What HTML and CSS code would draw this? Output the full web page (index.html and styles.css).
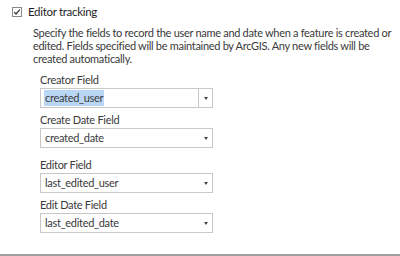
FILE: index.html
```html
<!DOCTYPE html>
<html>
<head>
<meta charset="utf-8">
<link rel="stylesheet" href="styles.css">
</head>
<body>
<div class="panel">
  <div class="header">
    <span class="checkbox">
      <svg width="8" height="8" viewBox="0 0 8 8"><path d="M1.2 4.2 L3 6 L6.8 1.6" fill="none" stroke="#333" stroke-width="1.2"/></svg>
    </span>
    <span class="title">Editor tracking</span>
  </div>
  <p class="desc">Specify the fields to record the user name and date when a feature is created or edited. Fields specified will be maintained by ArcGIS. Any new fields will be created automatically.</p>
  <div class="fields">
    <div class="group">
      <div class="label">Creator Field</div>
      <div class="select focused"><span class="value selected">created_user</span><span class="btn"><span class="arrow"></span></span></div>
      <div class="label">Create Date Field</div>
      <div class="select"><span class="value">created_date</span><span class="btn"><span class="arrow"></span></span></div>
    </div>
    <div class="group">
      <div class="label">Editor Field</div>
      <div class="select"><span class="value">last_edited_user</span><span class="btn"><span class="arrow"></span></span></div>
      <div class="label">Edit Date Field</div>
      <div class="select"><span class="value">last_edited_date</span><span class="btn"><span class="arrow"></span></span></div>
    </div>
  </div>
  <div class="rule"></div>
</div>
</body>
</html>
```

FILE: styles.css
```css
html, body {
  margin: 0;
  padding: 0;
  background: #fff;
}
body {
  font-family: "Lato", "Noto Sans", sans-serif;
  font-size: 11px;
  letter-spacing: -0.3px;
  color: #3a3a3a;
  width: 400px;
  height: 256px;
  overflow: hidden;
}
.panel {
  display: flex;
  flex-direction: column;
  height: 256px;
}
.header {
  display: flex;
  align-items: center;
  gap: 6px;
  padding: 4px 0 0 12px;
  height: 16px;
}
.checkbox {
  width: 8px;
  height: 8px;
  border: 1px solid #8a8a8a;
  background: #fff;
  display: flex;
  align-items: center;
  justify-content: center;
}
.checkbox svg { display: block; }
.title {
  font-size: 11.5px;
  color: #1e1e1e;
  line-height: 16px;
}
.desc {
  margin: 6px 0 0 33px;
  line-height: 13px;
  width: 364px;
}
.fields {
  display: flex;
  flex-direction: column;
  gap: 9px;
  margin: 7px 0 0 40px;
  width: 173px;
}
.group {
  display: flex;
  flex-direction: column;
}
.label {
  line-height: 15px;
  margin-top: 4px;
  margin-bottom: 1px;
}
.group .label:first-child { margin-top: 0; }
.select {
  height: 18px;
  border: 1px solid #c8c8c8;
  display: flex;
  align-items: center;
  background: #fff;
}
.value {
  flex: 1;
  padding-left: 4px;
  line-height: 16px;
}
.value.selected {
  flex: none;
  margin-left: 3px;
  margin-right: auto;
  padding: 0 1px;
  background: #b9d7f5;
}
.btn {
  width: 13px;
  height: 18px;
  display: flex;
  align-items: center;
  justify-content: center;
}
.focused .btn {
  border-left: 1px solid #c8c8c8;
}
.arrow {
  width: 0;
  height: 0;
  border-left: 2.5px solid transparent;
  border-right: 2.5px solid transparent;
  border-top: 3px solid #444;
}
.rule {
  margin-top: auto;
  height: 2px;
  background: #a0a0a0;
}
```
